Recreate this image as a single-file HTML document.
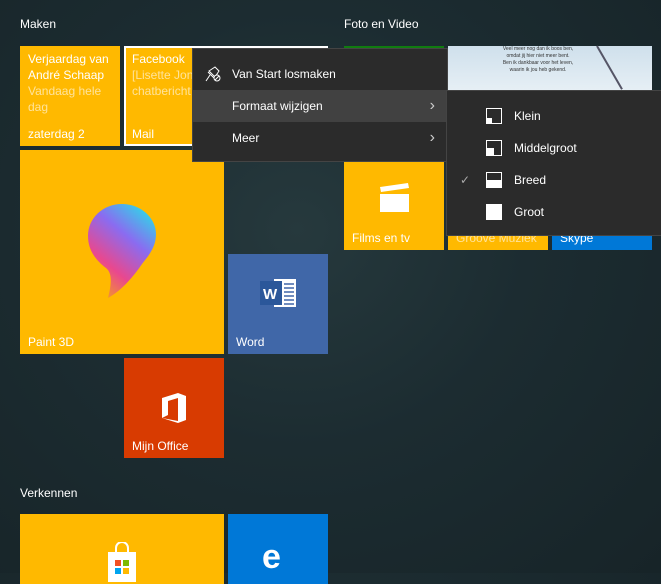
<!DOCTYPE html>
<html><head><meta charset="utf-8"><style>
*{margin:0;padding:0;box-sizing:border-box}
body{width:661px;height:573px;overflow:hidden;position:relative;font-family:"Segoe UI","Liberation Sans",sans-serif;color:#fff;
background:radial-gradient(ellipse at 45% 40%,#26393d 0%,#1c2c31 45%,#172428 100%);}
.a{position:absolute}
.lbl{font-size:12px}
.t{position:absolute;font-size:12px}
.t .n{position:absolute;left:8px;bottom:5px}
.y{background:#ffb900}
.menu{background:#2b2b2b;border:1px solid #444;font-size:12px}
.mi{position:absolute;left:0;right:0;height:32px;line-height:32px}
</style></head><body>
<div class="a lbl" style="left:20px;top:17px">Maken</div>
<div class="a lbl" style="left:344px;top:17px">Foto en Video</div>
<div class="a lbl" style="left:20px;top:486px">Verkennen</div>

<div class="t y" style="left:20px;top:46px;width:100px;height:100px">
<div class="a" style="left:8px;top:5px;line-height:16px">Verjaardag van<br>André Schaap<br><span style="color:#ffe39a">Vandaag hele<br>dag</span></div>
<div class="n">zaterdag 2</div></div>
<div class="t y" style="left:124px;top:46px;width:204px;height:100px;border:2px solid #fff">
<div class="a" style="left:6px;top:3px;line-height:16px">Facebook<br><span style="color:#ffe39a">[Lisette Jon<br>chatbericht</span></div>
<div class="a" style="left:6px;bottom:3px">Mail</div></div>

<div class="t y" style="left:20px;top:150px;width:204px;height:204px">
<svg class="a" style="left:66px;top:52px" width="72" height="98" viewBox="0 0 72 98">
<defs><linearGradient id="g" x1="0.8" y1="0" x2="0.2" y2="1"><stop offset="0" stop-color="#2fd8e8"/><stop offset="0.35" stop-color="#8a6cf0"/><stop offset="0.7" stop-color="#e9488e"/><stop offset="1" stop-color="#f4a020"/></linearGradient></defs>
<path d="M36 2C17 2 2 16 2 34c0 16 10 26 18 32 6 5 6 14 2 30 14-8 26-22 34-34 8-10 14-18 14-30C70 16 55 2 36 2z" fill="url(#g)"/></svg>
<div class="n">Paint 3D</div></div>

<div class="t" style="left:228px;top:254px;width:100px;height:100px;background:#4067a8">
<svg class="a" style="left:32px;top:24px" width="38" height="30" viewBox="0 0 38 30">
<rect x="14" y="1" width="22" height="28" fill="#fff"/><g stroke="#4067a8" stroke-width="1.5"><path d="M24 6h10M24 10h10M24 14h10M24 18h10M24 22h10M24 26h10"/></g>
<rect x="0" y="3" width="22" height="24" fill="#2b579a"/><text x="3" y="21" font-size="15" font-weight="bold" fill="#fff" font-family="Liberation Sans">W</text></svg>
<div class="n">Word</div></div>

<div class="t" style="left:124px;top:358px;width:100px;height:100px;background:#d83b01">
<svg class="a" style="left:36px;top:34px" width="28" height="32" viewBox="0 0 28 32"><path d="M2 6L18 1l8 3v24l-8 3L2 26l16 3V6L8 9v14l-6 3z" fill="#fff"/></svg>
<div class="n">Mijn Office</div></div>

<div class="t y" style="left:20px;top:514px;width:204px;height:70px">
<svg class="a" style="left:86px;top:28px" width="32" height="40" viewBox="0 0 32 40"><path d="M10 10V6a6 6 0 0112 0v4" stroke="#fff" stroke-width="2" fill="none"/><rect x="2" y="10" width="28" height="30" fill="#fff"/><rect x="9" y="18" width="6" height="6" fill="#f25022"/><rect x="17" y="18" width="6" height="6" fill="#7fba00"/><rect x="9" y="26" width="6" height="6" fill="#00a4ef"/><rect x="17" y="26" width="6" height="6" fill="#ffb900"/></svg></div>
<div class="t" style="left:228px;top:514px;width:100px;height:70px;background:#0078d7">
<div class="a" style="left:34px;top:26px;font:bold 34px 'Liberation Sans',sans-serif;line-height:34px">e</div></div>

<!-- right group -->
<div class="t" style="left:344px;top:46px;width:100px;height:50px;background:#107c10"></div>
<div class="t" style="left:448px;top:46px;width:204px;height:50px;background:linear-gradient(#cfe0ec,#e9f1f6)">
<div class="a" style="left:45px;top:0;width:90px;font-size:5px;line-height:7px;color:#333;text-align:center">Veel meer nog dan ik boos ben,<br>omdat jij hier niet meer bent.<br>Ben ik dankbaar voor het leven,<br>waarin ik jou heb gekend.</div>
<div class="a" style="left:148px;top:0;width:2px;height:50px;background:#556;transform:rotate(-30deg);transform-origin:top"></div></div>
<div class="t y" style="left:344px;top:162px;width:100px;height:88px">
<svg class="a" style="left:34px;top:20px" width="32" height="32" viewBox="0 0 32 32"><path d="M2 5l28-4 1 5-28 4z" fill="#fff"/><rect x="2" y="12" width="29" height="18" fill="#fff"/></svg>
<div class="n">Films en tv</div></div>
<div class="t y" style="left:448px;top:162px;width:100px;height:88px"><div class="n" style="color:#ffe39a">Groove Muziek</div></div>
<div class="t" style="left:552px;top:162px;width:100px;height:88px;background:#0078d7"><div class="n">Skype</div></div>

<!-- context menu -->
<div class="a menu" style="left:192px;top:48px;width:256px;height:114px">
<div class="mi" style="top:9px;padding-left:39px">Van Start losmaken
<svg class="a" style="left:12px;top:8px" width="16" height="16" viewBox="0 0 16 16" fill="none" stroke="#fff" stroke-width="1"><path d="M5 9L1 15M4 5l6-4 4 4-4 6zM3 6l6 6"/><circle cx="12" cy="12" r="3" fill="#2b2b2b"/><path d="M10 14l4-4"/></svg></div>
<div class="mi" style="top:41px;padding-left:39px;background:#414141">Formaat wijzigen<span class="a" style="right:12px;top:0;font-size:16px;color:#ccc">›</span></div>
<div class="mi" style="top:73px;padding-left:39px">Meer<span class="a" style="right:12px;top:0;font-size:16px;color:#ccc">›</span></div>
</div>
<div class="a menu" style="left:446px;top:90px;width:216px;height:146px">
<div class="mi" style="top:9px;padding-left:67px">Klein<svg class="a" style="left:39px;top:8px" width="16" height="16"><rect x="0.5" y="0.5" width="15" height="15" stroke="#fff" fill="none"/><rect x="0" y="10" width="6" height="6" fill="#fff"/></svg></div>
<div class="mi" style="top:41px;padding-left:67px">Middelgroot<svg class="a" style="left:39px;top:8px" width="16" height="16"><rect x="0.5" y="0.5" width="15" height="15" stroke="#fff" fill="none"/><rect x="0" y="8" width="8" height="8" fill="#fff"/></svg></div>
<div class="mi" style="top:73px;padding-left:67px">Breed<span class="a" style="left:13px;top:0;color:#aaa">✓</span><svg class="a" style="left:39px;top:8px" width="16" height="16"><rect x="0.5" y="0.5" width="15" height="15" stroke="#fff" fill="none"/><rect x="0" y="8" width="16" height="8" fill="#fff"/></svg></div>
<div class="mi" style="top:105px;padding-left:67px">Groot<svg class="a" style="left:39px;top:8px" width="16" height="16"><rect width="16" height="16" fill="#fff"/></svg></div>
</div>
</body></html>
